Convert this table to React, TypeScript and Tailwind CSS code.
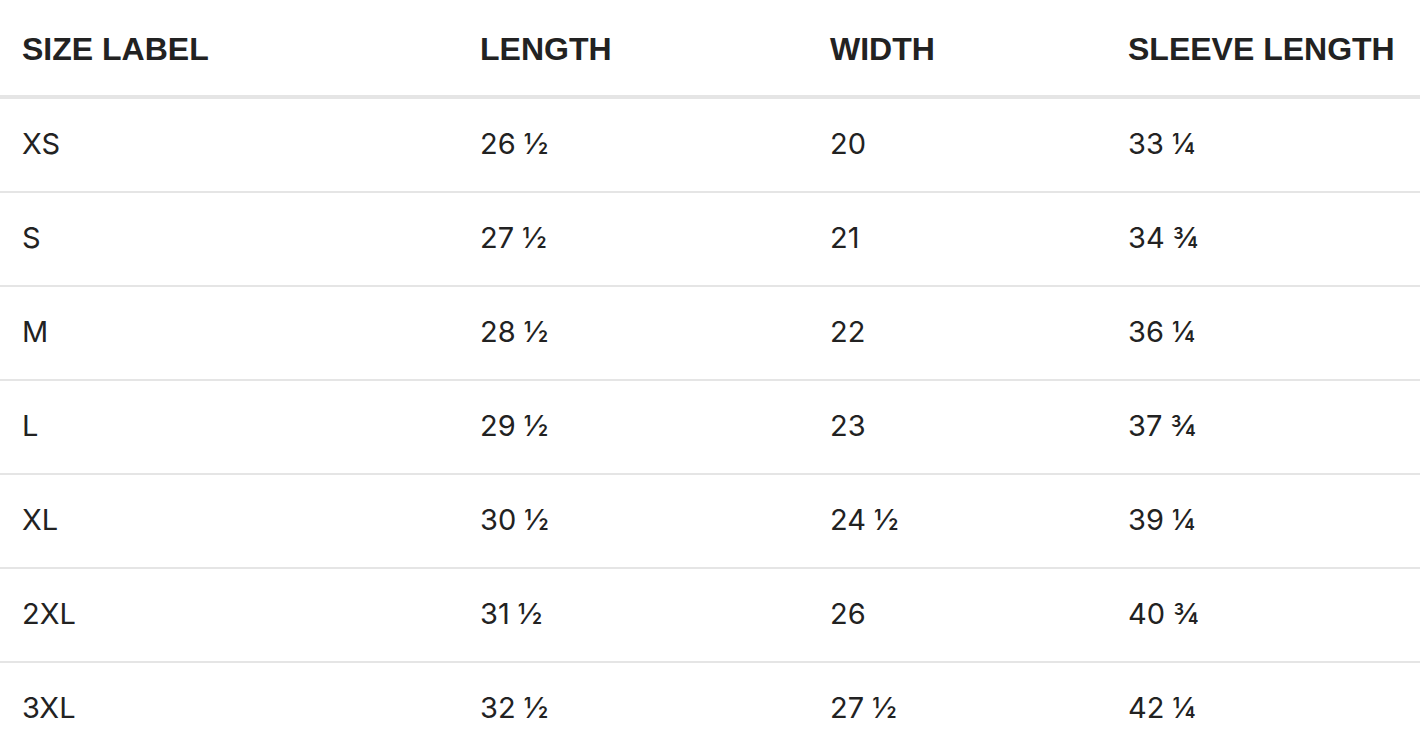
const rows = [
  ["XS", "26 ½", "20", "33 ¼"],
  ["S", "27 ½", "21", "34 ¾"],
  ["M", "28 ½", "22", "36 ¼"],
  ["L", "29 ½", "23", "37 ¾"],
  ["XL", "30 ½", "24 ½", "39 ¼"],
  ["2XL", "31 ½", "26", "40 ¾"],
  ["3XL", "32 ½", "27 ½", "42 ¼"],
];

const headers = ["SIZE LABEL", "LENGTH", "WIDTH", "SLEEVE LENGTH"];

const cols = "grid grid-cols-[458px_350px_298px_1fr] px-[22px]";

export default function App() {
  return (
    <div className="min-h-screen w-full bg-white text-[#222]">
      <div
        className={`${cols} h-[99px] items-center border-b-[4px] border-[#e5e5e5] pt-[2px] text-[32px] font-bold`}
        style={{ fontFamily: '"Liberation Sans", Arial, sans-serif' }}
      >
        {headers.map((h) => (
          <div key={h} className="whitespace-nowrap">
            {h}
          </div>
        ))}
      </div>
      {rows.map((r) => (
        <div
          key={r[0]}
          className={`${cols} h-[94px] items-center border-b-2 border-[#e5e5e5] pb-[3px] text-[29px]`}
          style={{ fontFamily: 'Inter, "Liberation Sans", sans-serif' }}
        >
          {r.map((c, i) => (
            <div key={i} className="whitespace-nowrap">
              {c}
            </div>
          ))}
        </div>
      ))}
    </div>
  );
}
